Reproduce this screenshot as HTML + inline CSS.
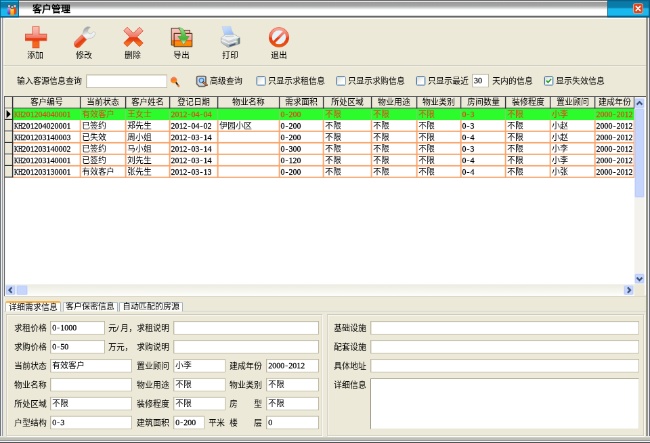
<!DOCTYPE html>
<html lang="zh-CN">
<head>
<meta charset="utf-8">
<title>客户管理</title>
<style>
*{box-sizing:border-box;margin:0;padding:0}
html,body{width:650px;height:443px;overflow:hidden;background:#ece9d8}
body{font-family:"Liberation Sans",sans-serif;position:relative}
#w{position:absolute;left:0;top:0;width:960px;height:655px;transform:scale(0.677083);transform-origin:0 0;will-change:transform;font-size:12px;line-height:14px;color:#000;background:#ece9d8;overflow:hidden}
#w div,#w svg{position:absolute}
i{font-style:normal;font-family:"Liberation Serif",serif;font-size:12px;-webkit-text-stroke:0.3px}
i b{display:inline-block;width:6px;text-align:center;font-weight:normal}
i u{display:inline-block;width:12px;text-decoration:none;transform:scaleX(0.69);transform-origin:0 50%;white-space:nowrap}
.t{white-space:nowrap}
.j{display:inline-block;text-align:justify;text-align-last:justify;white-space:nowrap}
s{display:inline-block;width:6px}
#titlebar{left:0;top:0;width:960px;height:26px;background:linear-gradient(#555 0,#555 1.3px,#f2f2f2 1.6px,#f2f2f2 2.8px,#9a9a9a 3.4px,#a6a6a6 8.5px,#d8dcdc 12px,#ffffff 14.5px,#ffffff 22.2px,#b0b0b0 23.6px,#5c5c5c 24px,#5c5c5c 25.4px,#fffefa 26px)}
#tl{left:0;top:0;width:28.2px;height:26px;background:linear-gradient(#0a5f86 0,#0a5f86 1px,#19b9ef 1.3px,#19b9ef 2.8px,#0a7aa8 3.2px,#0a7aa8 10px,#19b9ef 14px,#19b9ef 23.8px,#0a5a80 24.4px,#0a5a80 25.6px,#fff 26px);border-right:1.5px solid #0a5a80;border-left:1.5px solid #0a5a80}
#tr{left:897px;top:0;width:63px;height:26px;background:linear-gradient(#0a5f86 0,#0a5f86 1.5px,#0a7aa8 2px,#0a7aa8 11px,#19b9ef 13px,#19b9ef 22.5px,#0a6f98 23.5px,#0a5a80 24.5px,#0a5a80 25.6px,#fff 26px);border-left:1.5px solid #0a5a80;border-right:2px solid #0a5a80}
#title{left:48px;top:5px;font-size:14px;font-weight:bold;line-height:16px;letter-spacing:0px}
#close{left:936px;top:6px;width:13px;height:13px;background:#e2441a;border-radius:2px;box-shadow:0 0 0 1px #f0a58c}
#lb{left:0;top:26px;width:8px;height:629px;background:linear-gradient(90deg,#555 0,#555 1.4px,#e8edf4 1.4px,#e8edf4 2.8px,#8c9094 2.8px,#8c9094 4.5px,#e2e5e4 4.5px,#e2e5e4 6px,#f5f2e2 6px,#f5f2e2 7.4px,#ece9d8 7.4px)}
#rb{left:953.6px;top:26px;width:6.4px;height:629px;background:linear-gradient(90deg,#96968c 0,#96968c 2.7px,#e8ecf4 2.7px,#e8ecf4 4.7px,#4a4a50 4.7px)}
#bb{left:0;top:644px;width:960px;height:11px;background:linear-gradient(#e6e9e8 0,#e6e9e8 2.2px,#c0c0b4 2.2px,#c0c0b4 5.5px,#909098 5.5px,#909098 7.2px,#f4f4f4 7.2px,#f4f4f4 8.8px,#555 8.8px)}
#wl{left:6px;top:26px;width:948px;height:3px;background:linear-gradient(#fffefa 0,#fffefa 1.7px,rgba(255,254,250,0) 2.2px)}
.tb{top:75px;width:72px;text-align:center}
#sep1{left:5px;top:95.6px;width:949px;height:2px;background:linear-gradient(#c5c2b2 0,#c5c2b2 1px,#fff 1px)}
.inp{background:#fff;border:1px solid #bab69f;padding:2px 2px 0 2px;white-space:nowrap;overflow:hidden;box-shadow:inset 1px 1px 0 #e4e2d6}
.ta{border-color:#8a8670 #e4e2d6 #e4e2d6 #8a8670;box-shadow:none}
.cb{width:13px;height:13px;background:linear-gradient(135deg,#dcdcd4,#fff 70%);border:1px solid #2f6399;border-radius:1.5px;box-shadow:0 0 0 0.4px #6f97c0}
.hd{top:144px;height:16px;text-align:center;line-height:14px;white-space:nowrap;overflow:hidden}
.c{height:17px;line-height:19px;white-space:nowrap;overflow:hidden;padding-left:1.5px}
.sel{color:#e2431c}
#vsb{left:937px;top:143px;width:15px;height:277px;background:#f3f2ec}
#hsb{left:7px;top:420px;width:930px;height:16.5px;background:linear-gradient(#ecebe0,#fdfdfb)}
#corner{left:937px;top:420px;width:15px;height:16.5px;background:#ece9d8}
.sbb{width:15px;height:15px;background:#c5d5fc;border:1px solid #d9e3fd;border-radius:2.5px;box-shadow:0 0 0 0.6px #b5c6f2 inset}
.tab{top:446px;height:14px;background:#fbfbf8;border:1px solid #a2aebe;border-bottom:none;border-radius:2px 2px 0 0;line-height:13px;text-align:center;white-space:nowrap}
.tabsel{top:444.6px;height:15.4px;background:#fcfcfa;border-top:2.5px solid #ffa51f;line-height:14px;padding-top:0.4px;z-index:3;border-radius:3px 3px 0 0}
#panel{left:6px;top:458.6px;width:948px;height:186px;border-top:1px solid #c9cdd6;background:#ece9d8}
.grp{top:463.5px;height:180px;border:1px solid #cfccbd;box-shadow:1px 1px 0 #fff, inset 1px 1px 0 #fff}
.l{line-height:14px;white-space:nowrap}
</style>
</head>
<body>
<div id="w">
<div id="titlebar"></div><div id="tl"></div><div id="tr"></div>
<svg style="left:9px;top:4px" width="18" height="20" viewBox="0 0 18 20"><defs><linearGradient id="gy" x1="0" y1="0" x2="0" y2="1"><stop offset="0" stop-color="#ffe640"/><stop offset="1" stop-color="#ff8a00"/></linearGradient><linearGradient id="gpu" x1="0" y1="0" x2="0" y2="1"><stop offset="0" stop-color="#c9a0f0"/><stop offset="1" stop-color="#5a2aa8"/></linearGradient></defs><rect x="2" y="7" width="5" height="10.5" rx="2" fill="url(#gpu)"/><rect x="11" y="7" width="4.6" height="10.5" rx="2" fill="#e4461c"/><rect x="6.4" y="8" width="5.2" height="11" rx="2" fill="url(#gy)"/><circle cx="4.6" cy="5" r="2.3" fill="#cfcfd4" stroke="#444" stroke-width="0.8"/><circle cx="13" cy="5" r="2.3" fill="#cfcfd4" stroke="#444" stroke-width="0.8"/><circle cx="9" cy="6.6" r="2.3" fill="#b8b8c0" stroke="#333" stroke-width="0.8"/></svg>
<div id="title" class="t"><span class="j" style="width:56px">客户管理</span></div>
<div id="close"></div>
<svg style="left:936px;top:6px" width="13" height="13" viewBox="0 0 13 13"><path d="M3.5 3.5L9.5 9.5M9.5 3.5L3.5 9.5" stroke="#fff" stroke-width="2" stroke-linecap="round"/></svg>
<div id="wl"></div>
<div id="lb"></div><div id="rb"></div><div id="bb"></div>
<svg width="0" height="0" style="left:0;top:0"><defs>
<linearGradient id="gp" x1="0" y1="0" x2="0" y2="1"><stop offset="0" stop-color="#f7c0b8"/><stop offset="0.3" stop-color="#f3a49a"/><stop offset="0.53" stop-color="#ee7462"/><stop offset="0.56" stop-color="#e4380e"/><stop offset="0.66" stop-color="#e8420f"/><stop offset="0.74" stop-color="#f4661a"/><stop offset="1" stop-color="#f26a20"/></linearGradient>
<linearGradient id="gx" x1="0" y1="0" x2="0" y2="1"><stop offset="0" stop-color="#f7bdb5"/><stop offset="0.5" stop-color="#ee7664"/><stop offset="0.54" stop-color="#e3380f"/><stop offset="0.68" stop-color="#e84612"/><stop offset="0.8" stop-color="#f46c1c"/><stop offset="1" stop-color="#f2742a"/></linearGradient>
<linearGradient id="gw" x1="0.2" y1="0" x2="0.6" y2="1"><stop offset="0" stop-color="#8e9092"/><stop offset="0.35" stop-color="#c4c6c8"/><stop offset="0.6" stop-color="#f6f6f6"/><stop offset="1" stop-color="#e2e4e6"/></linearGradient>
<linearGradient id="gh" x1="0.25" y1="0.2" x2="0.7" y2="0.75"><stop offset="0" stop-color="#f5a294"/><stop offset="0.45" stop-color="#ec6a52"/><stop offset="0.55" stop-color="#e23a10"/><stop offset="1" stop-color="#ee5a14"/></linearGradient>
<linearGradient id="gf" x1="0" y1="0" x2="0" y2="1"><stop offset="0" stop-color="#f8c0bc"/><stop offset="0.48" stop-color="#f0a098"/><stop offset="0.5" stop-color="#ee5a1a"/><stop offset="0.6" stop-color="#f46a14"/><stop offset="0.64" stop-color="#ff8c10"/><stop offset="1" stop-color="#f58400"/></linearGradient><linearGradient id="gf2" x1="0" y1="0" x2="0" y2="1"><stop offset="0" stop-color="#f8c4c0"/><stop offset="0.68" stop-color="#f2a8a0"/><stop offset="0.72" stop-color="#f47818"/><stop offset="1" stop-color="#f58400"/></linearGradient>
<linearGradient id="gg" x1="0" y1="0" x2="0" y2="1"><stop offset="0" stop-color="#a8e098"/><stop offset="0.45" stop-color="#58c048"/><stop offset="0.7" stop-color="#48b038"/><stop offset="0.95" stop-color="#f0faec"/></linearGradient>
<linearGradient id="gpr" x1="0" y1="0" x2="0.3" y2="1"><stop offset="0" stop-color="#f2f2f2"/><stop offset="0.5" stop-color="#d4d8da"/><stop offset="1" stop-color="#a2aaae"/></linearGradient><linearGradient id="gpp" x1="0" y1="0" x2="0.6" y2="1"><stop offset="0" stop-color="#cfe0fa"/><stop offset="0.5" stop-color="#b8d2f8"/><stop offset="1" stop-color="#94baf2"/></linearGradient>
<linearGradient id="gn" gradientUnits="userSpaceOnUse" x1="0" y1="2" x2="0" y2="32"><stop offset="0" stop-color="#f6b0a0"/><stop offset="0.45" stop-color="#ee7058"/><stop offset="0.55" stop-color="#e43c10"/><stop offset="0.8" stop-color="#ea4a0e"/><stop offset="1" stop-color="#f0600e"/></linearGradient>
<linearGradient id="go" x1="0" y1="0" x2="0.3" y2="1"><stop offset="0" stop-color="#f4a098"/><stop offset="0.4" stop-color="#f0705a"/><stop offset="0.55" stop-color="#fa7a14"/><stop offset="1" stop-color="#ff9a10"/></linearGradient>
</defs></svg>
<svg style="left:36px;top:38px" width="34" height="34" viewBox="0 0 34 34"><path d="M12.2 1.2h9.6v11.2h11v9.6H21.8v10.6h-9.6V22H1.6v-9.6h10.6z" fill="url(#gp)" stroke="#e2502e" stroke-width="1.1"/></svg>
<svg style="left:108px;top:38px" width="34" height="34" viewBox="0 0 34 34"><path d="M12.6 13.6L19.8 20.6L9.4 31.6Q5.6 34 2.6 30.6Q0.2 27 2.6 23.6z" fill="url(#gh)" stroke="#e0502c" stroke-width="0.8"/><path d="M13.4 13.2Q15.2 11 15 8.4Q15.6 3.6 21 1.6Q23.4 1.2 25.4 2.4Q21.4 5 21.4 8Q21.8 11.4 25 12.2Q28 12.6 29.6 8.8L32.6 9.6Q33.2 14 30 16.8Q26.4 19.6 22.8 18.6Q21.6 19 20.6 20.4z" fill="url(#gw)" stroke="#b4b6b8" stroke-width="0.7"/></svg>
<svg style="left:180px;top:38px" width="34" height="34" viewBox="0 0 34 34"><path d="M8 2.2L17 11.2L26 2.2L31.3 7.5L22.3 16.5L31.3 25.5L26 30.8L17 21.8L8 30.8L2.7 25.5L11.7 16.5L2.7 7.5z" fill="url(#gx)" stroke="#de4a26" stroke-width="1" stroke-linejoin="round"/></svg>
<svg style="left:252px;top:38px" width="34" height="34" viewBox="0 0 34 34"><path d="M1.2 3.6h10.6l2.2 3h14.4v22H1.2z" fill="url(#gf2)" stroke="#4a3a2a" stroke-width="1.1" stroke-linejoin="round"/><path d="M5.2 11.4h26.4v19.4H5.2z" fill="url(#gf)" stroke="#5a3a1a" stroke-width="1.3" stroke-linejoin="round"/><path d="M12 2.5Q22 3.5 22.7 15.5L27.4 15.5L19.2 27.8L10.6 15.5L15.7 15.5Q15.6 7.5 12 2.5z" fill="url(#gg)" stroke="#3c9a30" stroke-width="0.7"/></svg>
<svg style="left:324px;top:38px" width="34" height="34" viewBox="0 0 34 34"><path d="M4.1 1.5L16.6 1Q17.5 7 20.8 11.5L21 14.5L8.1 15Q5.5 8 4.1 1.5z" fill="url(#gpp)" stroke="#a8c4ee" stroke-width="0.6"/><path d="M2.6 18L8.6 13.6L22.1 13L30.1 17.5L30.1 26.5L13.1 32L2.6 24.8z" fill="url(#gpr)" stroke="#8a949a" stroke-width="0.9" stroke-linejoin="round"/><path d="M2.6 18L8.6 13.6L22.1 13L30.1 17.5L13.8 22.6z" fill="#eff0f1" stroke="#b4babe" stroke-width="0.5"/><path d="M8.1 15L21 14.5L21.6 16.2L9 17z" fill="#c9ced2"/><path d="M2.8 21.2L13.6 26.4L30 21.4" fill="none" stroke="#f8f8f8" stroke-width="1.3"/><path d="M30.1 17.8L30.1 26.3L27.6 27.2L27.6 18.6z" fill="#6a747a"/><path d="M14.6 28.6L23.6 25.8L23.8 28.2L14.8 31z" fill="#4a5c78"/><circle cx="26.4" cy="21.3" r="1" fill="#3cc43c"/></svg>
<svg style="left:396px;top:38px" width="34" height="34" viewBox="0 0 34 34"><circle cx="16" cy="17" r="15" fill="url(#gn)"/><circle cx="16" cy="17" r="10.3" fill="#e6f2f9"/><path d="M8.4 24.6L23.6 9.4" stroke="url(#gn)" stroke-width="3.8" stroke-linecap="butt"/><circle cx="16" cy="17" r="14.4" fill="none" stroke="#e04a24" stroke-width="0.9" opacity="0.7"/></svg>
<svg style="left:248px;top:108px" width="22" height="24" viewBox="0 0 22 24"><path d="M11.6 13.4L15.8 19" stroke="#2a2420" stroke-width="2.4" stroke-linecap="round"/><path d="M14.8 17.8L16.3 19.8" stroke="#f07a2a" stroke-width="2" stroke-linecap="round"/><circle cx="8.7" cy="10.3" r="4.4" fill="url(#go)" stroke="#e8742a" stroke-width="0.7"/></svg>
<svg style="left:289px;top:110.8px" width="22" height="20" viewBox="0 0 22 20"><path d="M1.6 3.6Q1.6 1.6 3.6 1.6H13Q15 1.6 15 3.6V13Q15 16.6 12 16.6H5.2L1.6 13z" fill="#d4d6d8" stroke="#5e5e5e" stroke-width="1.7"/><circle cx="8.6" cy="7.8" r="3.3" fill="#a8d4f6" stroke="#2f7fd6" stroke-width="1.5"/><path d="M11.2 10.6L16.4 14.6" stroke="#3a2a20" stroke-width="3" stroke-linecap="round"/><path d="M11.6 10.9L16.2 14.4" stroke="#f0822e" stroke-width="1.7" stroke-linecap="round"/></svg>
<div class="tb t" style="left:16px"><span class="j" style="width:24px">添加</span></div>
<div class="tb t" style="left:88px"><span class="j" style="width:24px">修改</span></div>
<div class="tb t" style="left:160px"><span class="j" style="width:24px">删除</span></div>
<div class="tb t" style="left:232px"><span class="j" style="width:24px">导出</span></div>
<div class="tb t" style="left:304px"><span class="j" style="width:24px">打印</span></div>
<div class="tb t" style="left:376px"><span class="j" style="width:24px">退出</span></div>
<div id="sep1"></div>
<div class="l" style="left:25px;top:113px"><span class="j" style="width:96px">输入客源信息查询</span></div>
<div class="inp" style="left:127px;top:109.5px;width:119.5px;height:20px"></div>
<div class="l" style="left:310px;top:113px"><span class="j" style="width:48px">高级查询</span></div>
<div class="cb" style="left:379px;top:113px"></div>
<div class="l" style="left:396px;top:113px"><span class="j" style="width:84px">只显示求租信息</span></div>
<div class="cb" style="left:497px;top:113px"></div>
<div class="l" style="left:514px;top:113px"><span class="j" style="width:84px">只显示求购信息</span></div>
<div class="cb" style="left:615px;top:113px"></div>
<div class="l" style="left:632px;top:113px"><span class="j" style="width:60px">只显示最近</span></div>
<div class="inp" style="left:697px;top:109px;width:25px;height:20px"><i>30</i></div>
<div class="l" style="left:727px;top:113px"><span class="j" style="width:60px">天内的信息</span></div>
<div class="cb" style="left:804px;top:113px"></div>
<svg style="left:804px;top:113px" width="13" height="13" viewBox="0 0 13 13"><path d="M3 6l2.5 2.8L10 3.6" fill="none" stroke="#21a121" stroke-width="2"/></svg>
<div class="l" style="left:821px;top:113px"><span class="j" style="width:72px">显示失效信息</span></div>
<svg style="left:0;top:0" width="960" height="440" viewBox="0 0 960 440"><rect x="6" y="142" width="948" height="295" fill="#fff"/><rect x="7" y="143" width="931" height="17.3" fill="#ece9d8"/><rect x="7" y="143" width="11.5" height="119.3" fill="#ece9d8"/><rect x="19" y="160.4" width="919" height="16.8" fill="#2cfb2c"/><rect x="7" y="143" width="931" height="1" fill="#fff"/><rect x="7.1" y="143" width="1" height="16.3" fill="#fff"/><rect x="19.1" y="143" width="1" height="16.3" fill="#fff"/><rect x="119.1" y="143" width="1" height="16.3" fill="#fff"/><rect x="186.1" y="143" width="1" height="16.3" fill="#fff"/><rect x="251.1" y="143" width="1" height="16.3" fill="#fff"/><rect x="322.1" y="143" width="1" height="16.3" fill="#fff"/><rect x="413.1" y="143" width="1" height="16.3" fill="#fff"/><rect x="478.1" y="143" width="1" height="16.3" fill="#fff"/><rect x="549.1" y="143" width="1" height="16.3" fill="#fff"/><rect x="616.1" y="143" width="1" height="16.3" fill="#fff"/><rect x="681.1" y="143" width="1" height="16.3" fill="#fff"/><rect x="747.1" y="143" width="1" height="16.3" fill="#fff"/><rect x="813.1" y="143" width="1" height="16.3" fill="#fff"/><rect x="879.1" y="143" width="1" height="16.3" fill="#fff"/><rect x="19" y="192.85" width="919" height="2.00" fill="#f9a56c"/><rect x="19" y="209.85" width="919" height="2.00" fill="#f9a56c"/><rect x="19" y="226.85" width="919" height="2.00" fill="#f9a56c"/><rect x="19" y="243.85" width="919" height="2.00" fill="#f9a56c"/><rect x="19" y="260.85" width="919" height="2.00" fill="#f9a56c"/><rect x="19" y="177.20" width="919" height="0.9" fill="#fbe3d2"/><rect x="117.65" y="177.3" width="2.00" height="85.0" fill="#f9a56c"/><rect x="118.00" y="160.4" width="1.20" height="16.8" fill="#7fd46a"/><rect x="184.65" y="177.3" width="2.00" height="85.0" fill="#f9a56c"/><rect x="185.00" y="160.4" width="1.20" height="16.8" fill="#7fd46a"/><rect x="249.65" y="177.3" width="2.00" height="85.0" fill="#f9a56c"/><rect x="250.00" y="160.4" width="1.20" height="16.8" fill="#7fd46a"/><rect x="320.65" y="177.3" width="2.00" height="85.0" fill="#f9a56c"/><rect x="321.00" y="160.4" width="1.20" height="16.8" fill="#7fd46a"/><rect x="411.65" y="177.3" width="2.00" height="85.0" fill="#f9a56c"/><rect x="412.00" y="160.4" width="1.20" height="16.8" fill="#7fd46a"/><rect x="476.65" y="177.3" width="2.00" height="85.0" fill="#f9a56c"/><rect x="477.00" y="160.4" width="1.20" height="16.8" fill="#7fd46a"/><rect x="547.65" y="177.3" width="2.00" height="85.0" fill="#f9a56c"/><rect x="548.00" y="160.4" width="1.20" height="16.8" fill="#7fd46a"/><rect x="614.65" y="177.3" width="2.00" height="85.0" fill="#f9a56c"/><rect x="615.00" y="160.4" width="1.20" height="16.8" fill="#7fd46a"/><rect x="679.65" y="177.3" width="2.00" height="85.0" fill="#f9a56c"/><rect x="680.00" y="160.4" width="1.20" height="16.8" fill="#7fd46a"/><rect x="745.65" y="177.3" width="2.00" height="85.0" fill="#f9a56c"/><rect x="746.00" y="160.4" width="1.20" height="16.8" fill="#7fd46a"/><rect x="811.65" y="177.3" width="2.00" height="85.0" fill="#f9a56c"/><rect x="812.00" y="160.4" width="1.20" height="16.8" fill="#7fd46a"/><rect x="877.65" y="177.3" width="2.00" height="85.0" fill="#f9a56c"/><rect x="878.00" y="160.4" width="1.20" height="16.8" fill="#7fd46a"/><rect x="935.65" y="177.3" width="2.00" height="85.0" fill="#f9a56c"/><rect x="936.00" y="160.4" width="1.20" height="16.8" fill="#7fd46a"/><rect x="7" y="159.00" width="931" height="1.30" fill="#2e2e2e"/><rect x="17.90" y="143" width="1.50" height="17.3" fill="#2e2e2e"/><rect x="117.90" y="143" width="1.50" height="17.3" fill="#2e2e2e"/><rect x="184.90" y="143" width="1.50" height="17.3" fill="#2e2e2e"/><rect x="249.90" y="143" width="1.50" height="17.3" fill="#2e2e2e"/><rect x="320.90" y="143" width="1.50" height="17.3" fill="#2e2e2e"/><rect x="411.90" y="143" width="1.50" height="17.3" fill="#2e2e2e"/><rect x="476.90" y="143" width="1.50" height="17.3" fill="#2e2e2e"/><rect x="547.90" y="143" width="1.50" height="17.3" fill="#2e2e2e"/><rect x="614.90" y="143" width="1.50" height="17.3" fill="#2e2e2e"/><rect x="679.90" y="143" width="1.50" height="17.3" fill="#2e2e2e"/><rect x="745.90" y="143" width="1.50" height="17.3" fill="#2e2e2e"/><rect x="811.90" y="143" width="1.50" height="17.3" fill="#2e2e2e"/><rect x="877.90" y="143" width="1.50" height="17.3" fill="#2e2e2e"/><rect x="935.90" y="143" width="1.50" height="17.3" fill="#2e2e2e"/><rect x="17.90" y="160.3" width="1.50" height="102.0" fill="#2e2e2e"/><rect x="7" y="175.80" width="11.5" height="1.50" fill="#2e2e2e"/><rect x="7" y="160.30" width="11" height="1" fill="#fff"/><rect x="7" y="192.80" width="11.5" height="1.50" fill="#2e2e2e"/><rect x="7" y="177.30" width="11" height="1" fill="#fff"/><rect x="7" y="209.80" width="11.5" height="1.50" fill="#2e2e2e"/><rect x="7" y="194.30" width="11" height="1" fill="#fff"/><rect x="7" y="226.80" width="11.5" height="1.50" fill="#2e2e2e"/><rect x="7" y="211.30" width="11" height="1" fill="#fff"/><rect x="7" y="243.80" width="11.5" height="1.50" fill="#2e2e2e"/><rect x="7" y="228.30" width="11" height="1" fill="#fff"/><rect x="7" y="260.80" width="11.5" height="1.50" fill="#2e2e2e"/><rect x="7" y="245.30" width="11" height="1" fill="#fff"/><rect x="6" y="436.6" width="948" height="1.5" fill="#d3d0c0"/><rect x="6" y="142" width="948" height="1.1" fill="#5c5c5c"/><rect x="6" y="142" width="1.1" height="295" fill="#5c5c5c"/><path d="M9.6 162.5L16 168.5L9.6 174.5z" fill="#000"/></svg>
<div class="hd" style="left:19px;width:99px"><span class="j" style="width:48px">客户编号</span></div>
<div class="hd" style="left:119px;width:66px"><span class="j" style="width:48px">当前状态</span></div>
<div class="hd" style="left:186px;width:64px"><span class="j" style="width:48px">客户姓名</span></div>
<div class="hd" style="left:251px;width:70px"><span class="j" style="width:48px">登记日期</span></div>
<div class="hd" style="left:322px;width:90px"><span class="j" style="width:48px">物业名称</span></div>
<div class="hd" style="left:413px;width:64px"><span class="j" style="width:48px">需求面积</span></div>
<div class="hd" style="left:478px;width:70px"><span class="j" style="width:48px">所处区域</span></div>
<div class="hd" style="left:549px;width:66px"><span class="j" style="width:48px">物业用途</span></div>
<div class="hd" style="left:616px;width:64px"><span class="j" style="width:48px">物业类别</span></div>
<div class="hd" style="left:681px;width:65px"><span class="j" style="width:48px">房间数量</span></div>
<div class="hd" style="left:747px;width:65px"><span class="j" style="width:48px">装修程度</span></div>
<div class="hd" style="left:813px;width:65px"><span class="j" style="width:48px">置业顾问</span></div>
<div class="hd" style="left:879px;width:57px"><span class="j" style="width:48px">建成年份</span></div>
<div class="c sel" style="left:19px;top:160.3px;width:99px"><i><u>KH</u>201204040001</i></div>
<div class="c sel" style="left:119px;top:160.3px;width:66px"><span class="j" style="width:48px">有效客户</span></div>
<div class="c sel" style="left:186px;top:160.3px;width:64px"><span class="j" style="width:36px">王女士</span></div>
<div class="c sel" style="left:251px;top:160.3px;width:70px"><i>2012<b>-</b>04<b>-</b>04</i></div>
<div class="c sel" style="left:413px;top:160.3px;width:64px"><i>0<b>-</b>200</i></div>
<div class="c sel" style="left:478px;top:160.3px;width:70px"><span class="j" style="width:24px">不限</span></div>
<div class="c sel" style="left:549px;top:160.3px;width:66px"><span class="j" style="width:24px">不限</span></div>
<div class="c sel" style="left:616px;top:160.3px;width:64px"><span class="j" style="width:24px">不限</span></div>
<div class="c sel" style="left:681px;top:160.3px;width:65px"><i>0<b>-</b>3</i></div>
<div class="c sel" style="left:747px;top:160.3px;width:65px"><span class="j" style="width:24px">不限</span></div>
<div class="c sel" style="left:813px;top:160.3px;width:65px"><span class="j" style="width:24px">小李</span></div>
<div class="c sel" style="left:879px;top:160.3px;width:57px"><i>2000<b>-</b>2012</i></div>
<div class="c" style="left:19px;top:177.3px;width:99px"><i><u>KH</u>201204020001</i></div>
<div class="c" style="left:119px;top:177.3px;width:66px"><span class="j" style="width:36px">已签约</span></div>
<div class="c" style="left:186px;top:177.3px;width:64px"><span class="j" style="width:36px">郑先生</span></div>
<div class="c" style="left:251px;top:177.3px;width:70px"><i>2012<b>-</b>04<b>-</b>02</i></div>
<div class="c" style="left:322px;top:177.3px;width:90px"><span class="j" style="width:48px">伊园小区</span></div>
<div class="c" style="left:413px;top:177.3px;width:64px"><i>0<b>-</b>200</i></div>
<div class="c" style="left:478px;top:177.3px;width:70px"><span class="j" style="width:24px">不限</span></div>
<div class="c" style="left:549px;top:177.3px;width:66px"><span class="j" style="width:24px">不限</span></div>
<div class="c" style="left:616px;top:177.3px;width:64px"><span class="j" style="width:24px">不限</span></div>
<div class="c" style="left:681px;top:177.3px;width:65px"><i>0<b>-</b>3</i></div>
<div class="c" style="left:747px;top:177.3px;width:65px"><span class="j" style="width:24px">不限</span></div>
<div class="c" style="left:813px;top:177.3px;width:65px"><span class="j" style="width:24px">小赵</span></div>
<div class="c" style="left:879px;top:177.3px;width:57px"><i>2000<b>-</b>2012</i></div>
<div class="c" style="left:19px;top:194.3px;width:99px"><i><u>KH</u>201203140003</i></div>
<div class="c" style="left:119px;top:194.3px;width:66px"><span class="j" style="width:36px">已失效</span></div>
<div class="c" style="left:186px;top:194.3px;width:64px"><span class="j" style="width:36px">周小姐</span></div>
<div class="c" style="left:251px;top:194.3px;width:70px"><i>2012<b>-</b>03<b>-</b>14</i></div>
<div class="c" style="left:413px;top:194.3px;width:64px"><i>0<b>-</b>200</i></div>
<div class="c" style="left:478px;top:194.3px;width:70px"><span class="j" style="width:24px">不限</span></div>
<div class="c" style="left:549px;top:194.3px;width:66px"><span class="j" style="width:24px">不限</span></div>
<div class="c" style="left:616px;top:194.3px;width:64px"><span class="j" style="width:24px">不限</span></div>
<div class="c" style="left:681px;top:194.3px;width:65px"><i>0<b>-</b>4</i></div>
<div class="c" style="left:747px;top:194.3px;width:65px"><span class="j" style="width:24px">不限</span></div>
<div class="c" style="left:813px;top:194.3px;width:65px"><span class="j" style="width:24px">小赵</span></div>
<div class="c" style="left:879px;top:194.3px;width:57px"><i>2000<b>-</b>2012</i></div>
<div class="c" style="left:19px;top:211.3px;width:99px"><i><u>KH</u>201203140002</i></div>
<div class="c" style="left:119px;top:211.3px;width:66px"><span class="j" style="width:36px">已签约</span></div>
<div class="c" style="left:186px;top:211.3px;width:64px"><span class="j" style="width:36px">马小姐</span></div>
<div class="c" style="left:251px;top:211.3px;width:70px"><i>2012<b>-</b>03<b>-</b>14</i></div>
<div class="c" style="left:413px;top:211.3px;width:64px"><i>0<b>-</b>300</i></div>
<div class="c" style="left:478px;top:211.3px;width:70px"><span class="j" style="width:24px">不限</span></div>
<div class="c" style="left:549px;top:211.3px;width:66px"><span class="j" style="width:24px">不限</span></div>
<div class="c" style="left:616px;top:211.3px;width:64px"><span class="j" style="width:24px">不限</span></div>
<div class="c" style="left:681px;top:211.3px;width:65px"><i>0<b>-</b>3</i></div>
<div class="c" style="left:747px;top:211.3px;width:65px"><span class="j" style="width:24px">不限</span></div>
<div class="c" style="left:813px;top:211.3px;width:65px"><span class="j" style="width:24px">小李</span></div>
<div class="c" style="left:879px;top:211.3px;width:57px"><i>2000<b>-</b>2012</i></div>
<div class="c" style="left:19px;top:228.3px;width:99px"><i><u>KH</u>201203140001</i></div>
<div class="c" style="left:119px;top:228.3px;width:66px"><span class="j" style="width:36px">已签约</span></div>
<div class="c" style="left:186px;top:228.3px;width:64px"><span class="j" style="width:36px">刘先生</span></div>
<div class="c" style="left:251px;top:228.3px;width:70px"><i>2012<b>-</b>03<b>-</b>14</i></div>
<div class="c" style="left:413px;top:228.3px;width:64px"><i>0<b>-</b>120</i></div>
<div class="c" style="left:478px;top:228.3px;width:70px"><span class="j" style="width:24px">不限</span></div>
<div class="c" style="left:549px;top:228.3px;width:66px"><span class="j" style="width:24px">不限</span></div>
<div class="c" style="left:616px;top:228.3px;width:64px"><span class="j" style="width:24px">不限</span></div>
<div class="c" style="left:681px;top:228.3px;width:65px"><i>0<b>-</b>4</i></div>
<div class="c" style="left:747px;top:228.3px;width:65px"><span class="j" style="width:24px">不限</span></div>
<div class="c" style="left:813px;top:228.3px;width:65px"><span class="j" style="width:24px">小李</span></div>
<div class="c" style="left:879px;top:228.3px;width:57px"><i>2000<b>-</b>2012</i></div>
<div class="c" style="left:19px;top:245.3px;width:99px"><i><u>KH</u>201203130001</i></div>
<div class="c" style="left:119px;top:245.3px;width:66px"><span class="j" style="width:48px">有效客户</span></div>
<div class="c" style="left:186px;top:245.3px;width:64px"><span class="j" style="width:36px">张先生</span></div>
<div class="c" style="left:251px;top:245.3px;width:70px"><i>2012<b>-</b>03<b>-</b>13</i></div>
<div class="c" style="left:413px;top:245.3px;width:64px"><i>0<b>-</b>200</i></div>
<div class="c" style="left:478px;top:245.3px;width:70px"><span class="j" style="width:24px">不限</span></div>
<div class="c" style="left:549px;top:245.3px;width:66px"><span class="j" style="width:24px">不限</span></div>
<div class="c" style="left:616px;top:245.3px;width:64px"><span class="j" style="width:24px">不限</span></div>
<div class="c" style="left:681px;top:245.3px;width:65px"><i>0<b>-</b>4</i></div>
<div class="c" style="left:747px;top:245.3px;width:65px"><span class="j" style="width:24px">不限</span></div>
<div class="c" style="left:813px;top:245.3px;width:65px"><span class="j" style="width:24px">小张</span></div>
<div class="c" style="left:879px;top:245.3px;width:57px"><i>2000<b>-</b>2012</i></div>
<div id="vsb"></div><div id="hsb"></div><div id="corner"></div>
<div class="sbb" style="left:937.0px;top:145.0px"></div>
<svg style="left:937.0px;top:145.0px" width="15" height="15" viewBox="0.5 0.5 15 15"><path d="M4 10L8 6L12 10" fill="none" stroke="#3f5278" stroke-width="2.5"/></svg>
<div class="sbb" style="left:937.0px;top:404.0px"></div>
<svg style="left:937.0px;top:404.0px" width="15" height="15" viewBox="0.5 0.5 15 15"><path d="M4 6.5L8 10.5L12 6.5" fill="none" stroke="#3f5278" stroke-width="2.5"/></svg>
<div class="sbb" style="left:8.0px;top:420.5px"></div>
<svg style="left:8.0px;top:420.5px" width="15" height="15" viewBox="0.5 0.5 15 15"><path d="M10 4L6 8L10 12" fill="none" stroke="#3f5278" stroke-width="2.5"/></svg>
<div class="sbb" style="left:921.0px;top:420.5px"></div>
<svg style="left:921.0px;top:420.5px" width="15" height="15" viewBox="0.5 0.5 15 15"><path d="M6.5 4L10.5 8L6.5 12" fill="none" stroke="#3f5278" stroke-width="2.5"/></svg>
<div class="sbb" style="left:937px;top:160px;height:132px"></div>
<div class="sbb" style="left:24px;top:420.5px;width:17px"></div>
<div id="panel"></div>
<div class="tab tabsel" style="left:8px;width:82px"><span class="j" style="width:72px">详细需求信息</span></div>
<div class="tab" style="left:92.5px;width:81px"><span class="j" style="width:72px">客户保密信息</span></div>
<div class="tab" style="left:176px;width:94px"><span class="j" style="width:84px">自动匹配的房源</span></div>
<div class="grp" style="left:9px;width:467px"></div>
<div class="grp" style="left:482.5px;width:468px"></div>
<div class="l" style="left:21px;top:478px"><span class="j" style="width:48px">求租价格</span></div>
<div class="l" style="left:21px;top:506px"><span class="j" style="width:48px">求购价格</span></div>
<div class="l" style="left:21px;top:534px"><span class="j" style="width:48px">当前状态</span></div>
<div class="l" style="left:21px;top:562px"><span class="j" style="width:48px">物业名称</span></div>
<div class="l" style="left:21px;top:590px"><span class="j" style="width:48px">所处区域</span></div>
<div class="l" style="left:21px;top:618px"><span class="j" style="width:48px">户型结构</span></div>
<div class="inp" style="left:74.3px;top:474px;width:80.4px;height:20px"><i>0<b>-</b>1000</i></div>
<div class="l" style="left:160px;top:478px"><span class="j" style="width:90px">元<i><b>/</b></i>月，求租说明</span></div>
<div class="inp" style="left:256.3px;top:474px;width:214.4px;height:20px"></div>
<div class="inp" style="left:74.3px;top:502px;width:80.4px;height:20px"><i>0<b>-</b>50</i></div>
<div class="l" style="left:160px;top:506px"><span class="j" style="width:90px">万元， 求购说明</span></div>
<div class="inp" style="left:256.3px;top:502px;width:214.4px;height:20px"></div>
<div class="inp" style="left:74.3px;top:530px;width:120.4px;height:20px"><span class="j" style="width:48px">有效客户</span></div>
<div class="l" style="left:202px;top:534px"><span class="j" style="width:48px">置业顾问</span></div>
<div class="inp" style="left:256.3px;top:530px;width:76.4px;height:20px"><span class="j" style="width:24px">小李</span></div>
<div class="l" style="left:339px;top:534px"><span class="j" style="width:48px">建成年份</span></div>
<div class="inp" style="left:393.3px;top:530px;width:77.4px;height:20px"><i>2000<b>-</b>2012</i></div>
<div class="inp" style="left:74.3px;top:558px;width:120.4px;height:20px"></div>
<div class="l" style="left:202px;top:562px"><span class="j" style="width:48px">物业用途</span></div>
<div class="inp" style="left:256.3px;top:558px;width:76.4px;height:20px"><span class="j" style="width:24px">不限</span></div>
<div class="l" style="left:339px;top:562px"><span class="j" style="width:48px">物业类别</span></div>
<div class="inp" style="left:393.3px;top:558px;width:77.4px;height:20px"><span class="j" style="width:24px">不限</span></div>
<div class="inp" style="left:74.3px;top:586px;width:120.4px;height:20px"><span class="j" style="width:24px">不限</span></div>
<div class="l" style="left:202px;top:590px"><span class="j" style="width:48px">装修程度</span></div>
<div class="inp" style="left:256.3px;top:586px;width:76.4px;height:20px"><span class="j" style="width:24px">不限</span></div>
<div class="l" style="left:339px;top:590px"><span class="j" style="width:48px">房　　型</span></div>
<div class="inp" style="left:393.3px;top:586px;width:77.4px;height:20px"><span class="j" style="width:24px">不限</span></div>
<div class="inp" style="left:74.3px;top:614px;width:120.4px;height:20px"><i>0<b>-</b>3</i></div>
<div class="l" style="left:202px;top:618px"><span class="j" style="width:48px">建筑面积</span></div>
<div class="inp" style="left:256.3px;top:614px;width:45.4px;height:20px"><i>0<b>-</b>200</i></div>
<div class="l" style="left:308px;top:618px"><span class="j" style="width:24px">平米</span></div>
<div class="l" style="left:339px;top:618px"><span class="j" style="width:48px">楼　　层</span></div>
<div class="inp" style="left:393.3px;top:614px;width:77.4px;height:20px"><i>0</i></div>
<div class="l" style="left:493px;top:478px"><span class="j" style="width:48px">基础设施</span></div>
<div class="l" style="left:493px;top:506px"><span class="j" style="width:48px">配套设施</span></div>
<div class="l" style="left:493px;top:534px"><span class="j" style="width:48px">具体地址</span></div>
<div class="l" style="left:493px;top:562px"><span class="j" style="width:48px">详细信息</span></div>
<div class="inp" style="left:547.3px;top:474px;width:396.4px;height:20px"></div>
<div class="inp" style="left:547.3px;top:502px;width:396.4px;height:20px"></div>
<div class="inp" style="left:547.3px;top:530px;width:396.4px;height:20px"></div>
<div class="inp ta" style="left:547.3px;top:559px;width:396.4px;height:75px"></div>
</div>
</body>
</html>
